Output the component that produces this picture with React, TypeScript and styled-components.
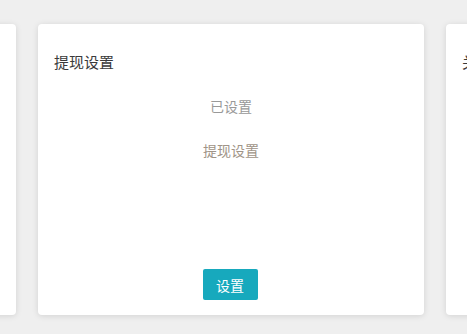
import * as React from "react";
import styled, { createGlobalStyle } from "styled-components";

const GlobalStyle = createGlobalStyle`
  html, body {
    margin: 0;
    padding: 0;
    background: #efefef;
    font-family: "Noto Sans CJK SC", "Liberation Sans", sans-serif;
  }
`;

interface CardData {
  title: string;
  status: string;
  desc: string;
}

const cards: CardData[] = [
  { title: "支付设置", status: "已设置", desc: "支付设置" },
  { title: "提现设置", status: "已设置", desc: "提现设置" },
  { title: "关注设置", status: "未设置", desc: "关注设置" },
];

export default function App() {
  return (
    <>
      <GlobalStyle />
      <Viewport>
        <Row>
          {cards.map((c) => (
            <Card key={c.title}>
              <CardTitle>{c.title}</CardTitle>
              <Status>{c.status}</Status>
              <Desc>{c.desc}</Desc>
              <Footer>
                <SetButton>设置</SetButton>
              </Footer>
            </Card>
          ))}
        </Row>
      </Viewport>
    </>
  );
}

const Viewport = styled.main`
  width: 467px;
  height: 334px;
  overflow: hidden;
  background: #efefef;
`;

const Row = styled.div`
  display: flex;
  gap: 22px;
  padding-top: 24px;
  margin-left: -370px;
`;

const Card = styled.section`
  flex: 0 0 386px;
  height: 291px;
  box-sizing: border-box;
  background: #fff;
  border-radius: 4px;
  box-shadow: 0 1px 6px rgba(0, 0, 0, 0.12);
  padding: 28px 16px 15px;
  display: flex;
  flex-direction: column;
`;

const CardTitle = styled.h3`
  margin: 0;
  font-size: 15px;
  font-weight: normal;
  line-height: 20px;
  color: #3a3a3a;
`;

const Status = styled.p`
  margin: 24px 0 0;
  text-align: center;
  font-size: 14px;
  line-height: 20px;
  color: #999;
`;

const Desc = styled.p`
  margin: 24px 0 0;
  text-align: center;
  font-size: 14px;
  line-height: 20px;
  color: #a09487;
`;

const Footer = styled.div`
  margin-top: auto;
  display: flex;
  justify-content: center;
`;

const SetButton = styled.button`
  width: 55px;
  height: 31px;
  margin-left: -2px;
  border: none;
  border-radius: 2px;
  background: #17a9bd;
  color: #fff;
  font-family: inherit;
  font-size: 14px;
  padding: 0;
  cursor: pointer;
`;
